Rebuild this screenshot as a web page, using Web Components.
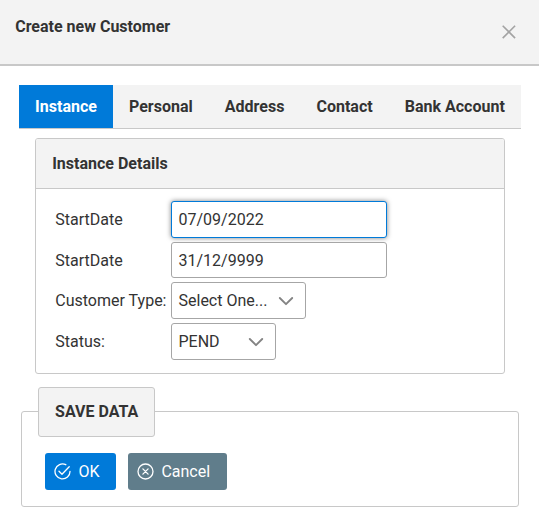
<!DOCTYPE html>
<html lang="en">
<head>
<meta charset="utf-8">
<title>Create new Customer</title>
<style>
  body { margin: 0; background: #fff; color: #333; font: 16px/20px Roboto, sans-serif; }
</style>
</head>
<body>
<customer-dialog></customer-dialog>
<script>
const define = (name, html) => customElements.define(name, class extends HTMLElement {
  connectedCallback() {
    if (this.shadowRoot) return;
    const t = document.createElement('template');
    t.innerHTML = html;
    this.attachShadow({ mode: 'open' }).append(t.content.cloneNode(true));
  }
});

define('dialog-header', `
  <style>
    :host { display: flex; justify-content: space-between; box-sizing: border-box; height: 66px;
      padding: 17px 22px 0 15.2px; background: #f3f3f3; border-bottom: 2px solid #c8c8c8; font-weight: 700; }
    svg { display: block; margin-top: 7px; }
  </style>
  <slot></slot>
  <svg width="16" height="16" viewBox="0 0 16 16" fill="none" stroke="#a3a3a3" stroke-width="1.6"><path d="M1.7 1.7l12.4 12.4M14.1 1.7L1.7 14.1"/></svg>`);

define('tab-bar', `
  <style>
    :host { display: flex; height: 43px; background: #f3f3f3; border-bottom: 1px solid #c8c8c8; }
  </style><slot></slot>`);

define('tab-item', `
  <style>
    :host { padding: 12px 16px 11px 16.1px; font-weight: 700; white-space: nowrap; }
    :host([active]) { background: #007ad9; color: #fff; }
  </style><slot></slot>`);

define('detail-panel', `
  <style>
    :host { display: block; box-sizing: border-box; height: 236px; border: 1px solid #c8c8c8; border-radius: 3px; overflow: hidden; }
    header { box-sizing: border-box; height: 50px; padding: 15px 16.2px; background: #f3f3f3; border-bottom: 1px solid #c8c8c8; font-weight: 700; }
    .body { display: grid; padding: 12px 19px; row-gap: 4px; }
  </style>
  <header><slot name="title"></slot></header>
  <div class="body"><slot></slot></div>`);

define('form-row', `
  <style>
    :host { display: grid; grid-template-columns: 116px auto; justify-content: start; align-items: center; white-space: nowrap; }
    span { padding: 1px 0 0 .3px; }
  </style>
  <span><slot name="label"></slot></span><slot></slot>`);

define('text-field', `
  <style>
    :host { display: block; box-sizing: border-box; width: 216px; height: 36px; padding: 8px 6.5px 6px;
      border: 1px solid #a6a6a6; border-radius: 3px; background: #fff; }
    :host([focused]) { height: 37px; border-color: #007ad9; box-shadow: 0 0 5px rgba(0,0,0,.5); }
  </style><slot></slot>`);

define('select-field', `
  <style>
    :host { display: flex; justify-content: space-between; align-items: center; box-sizing: border-box; height: 37px;
      padding: 0 11px 0 6.5px; border: 1px solid #a6a6a6; border-radius: 3px; background: #fff; }
    svg { display: block; }
  </style>
  <slot></slot>
  <svg width="16" height="16" viewBox="0 0 16 16" fill="none" stroke="#848484" stroke-width="1.9" stroke-linecap="round" stroke-linejoin="round"><path d="M1.8 5L8 11.2 14.2 5"/></svg>`);

define('save-box', `
  <style>
    :host { display: block; }
    fieldset { box-sizing: border-box; height: 120px; margin: 0; padding: 16.4px 23px 0; border: 1px solid #c8c8c8; border-radius: 3px; min-width: 0; }
    legend { box-sizing: border-box; width: 117px; height: 50px; margin-left: -7px; padding: 14px 0 0 16.1px;
      border: 1px solid #c8c8c8; border-radius: 3px; background: #f3f3f3; font-weight: 700; white-space: nowrap; }
    .actions { display: flex; gap: 12px; }
  </style>
  <fieldset><legend><slot name="title"></slot></legend><div class="actions"><slot></slot></div></fieldset>`);

define('action-button', `
  <style>
    :host { display: flex; align-items: center; gap: 7.4px; box-sizing: border-box; height: 37px; padding: 1px 9px 0;
      border-radius: 3px; background: #007ad9; color: #fff; }
    :host([secondary]) { background: #607d8b; }
    ::slotted(svg) { display: block; flex: none; margin-bottom: 1px; }
  </style><slot name="icon"></slot><slot></slot>`);

define('customer-dialog', `
  <style>
    :host { display: flex; flex-direction: column; box-sizing: border-box; height: 525px; }
    tab-bar { margin: 19px 18px 0 19px; }
    detail-panel { margin: 9px 34px 0 35px; }
    save-box { margin: 12.6px 20px 0 21px; }
    .type { width: 135px; }
    .status { width: 105px; }
    .ok { width: 71px; }
    .cancel { width: 99px; }
  </style>
  <dialog-header>Create new Customer</dialog-header>
  <tab-bar>
    <tab-item active>Instance</tab-item><tab-item>Personal</tab-item><tab-item>Address</tab-item><tab-item>Contact</tab-item><tab-item>Bank Account</tab-item>
  </tab-bar>
  <detail-panel>
    <span slot="title">Instance Details</span>
    <form-row><span slot="label">StartDate</span><text-field focused>07/09/2022</text-field></form-row>
    <form-row><span slot="label">StartDate</span><text-field>31/12/9999</text-field></form-row>
    <form-row><span slot="label">Customer Type:</span><select-field class="type">Select One...</select-field></form-row>
    <form-row><span slot="label">Status:</span><select-field class="status">PEND</select-field></form-row>
  </detail-panel>
  <save-box>
    <span slot="title">SAVE DATA</span>
    <action-button class="ok">
      <svg slot="icon" width="17" height="17" viewBox="0 0 17 17" fill="none" stroke="#fff" stroke-width="1.3" stroke-linecap="round" stroke-linejoin="round"><path d="M11.8 1.7A7.5 7.5 0 1 0 16 8.3M5 8.3l3 3L15.2 3.8"/></svg>OK</action-button>
    <action-button class="cancel" secondary>
      <svg slot="icon" width="17" height="17" viewBox="0 0 17 17" fill="none" stroke="#fff" stroke-width="1.3" stroke-linecap="round"><circle cx="8.5" cy="8.5" r="7.5"/><path d="M5.9 5.9l5.2 5.2M11.1 5.9l-5.2 5.2"/></svg>Cancel</action-button>
  </save-box>`);
</script>
</body>
</html>
